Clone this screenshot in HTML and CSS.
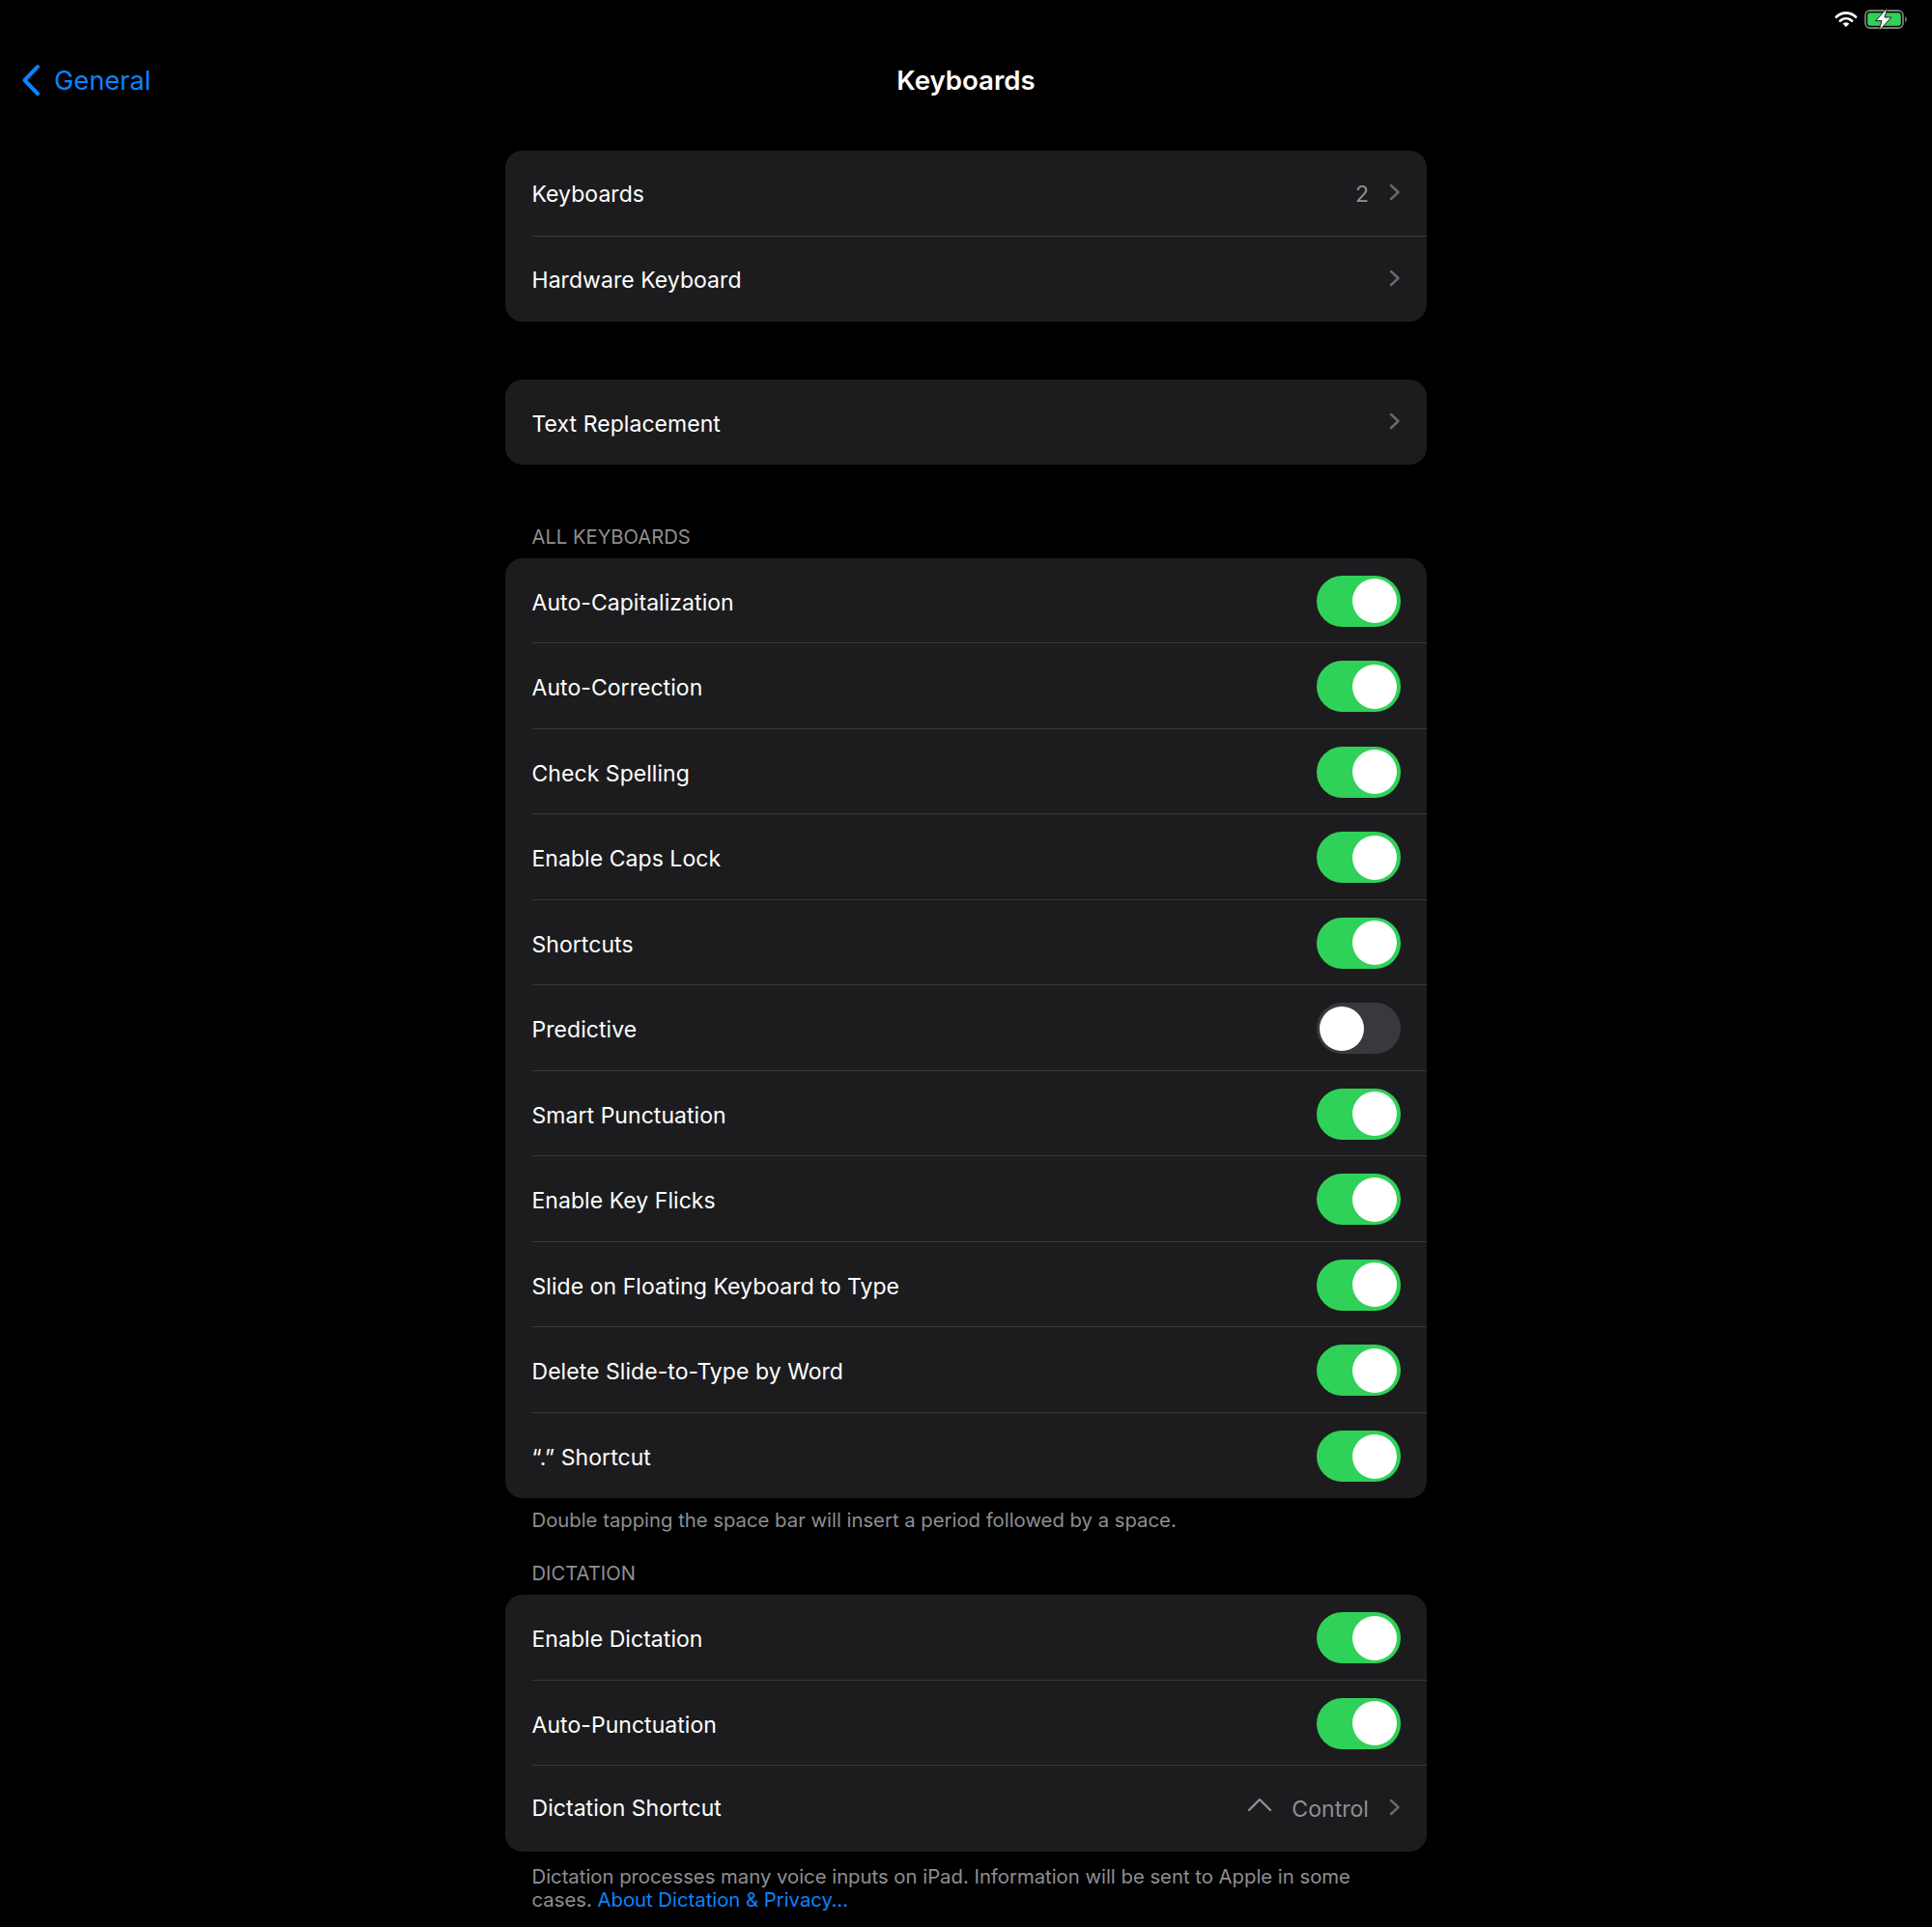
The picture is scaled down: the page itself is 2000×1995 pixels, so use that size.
FILE: index.html
```html
<!DOCTYPE html>
<html lang="en">
<head>
<meta charset="utf-8">
<title>Keyboards</title>
<link rel="stylesheet" href="styles.css">
</head>
<body>
<div class="status">
  <svg class="wifi" width="24" height="18" viewBox="0 0 24 18"><path d="M2 6.500C8 1 16 1 22 6.500" fill="none" stroke="#fff" stroke-width="2.800" stroke-linecap="round"/><path d="M6 10.500c3.600-3.200 8.400-3.200 12 0" fill="none" stroke="#fff" stroke-width="2.800" stroke-linecap="round"/><path d="M12 17l-3.400-3.600c2-1.600 4.800-1.600 6.800 0z" fill="#fff"/></svg>
  <svg class="battery" width="46" height="24" viewBox="0 0 46 24"><rect x="1" y="3" width="39" height="18" rx="5" fill="none" stroke="#7a7a7a" stroke-width="1.800"/><rect x="3.200" y="5.200" width="34.600" height="13.600" rx="3" fill="#30d158"/><path d="M42 9c2.500.5 2.500 5.500 0 6z" fill="#6e6e6e"/><path d="M24 0L11.500 13.500h6.500L15 24l13-14h-7z" fill="#fff" stroke="#1c1c1e" stroke-width="1"/></svg>
</div>
<header class="nav">
  <a class="back"><svg width="20" height="34" viewBox="0 0 20 34"><path d="M17 3L3.500 17 17 31" fill="none" stroke="#0a84ff" stroke-width="4" stroke-linecap="round" stroke-linejoin="round"/></svg><span>General</span></a>
  <h1>Keyboards</h1>
</header>
<main class="content">
  <section class="card">
    <div class="row link"><span>Keyboards</span><span class="value">2</span><svg class="chev" width="12" height="18" viewBox="0 0 12 18"><path d="M2 2l7.500 7L2 16" fill="none" stroke="#6a6a6e" stroke-width="2.400" stroke-linecap="round" stroke-linejoin="round"/></svg></div>
    <div class="row link"><span>Hardware Keyboard</span><svg class="chev" width="12" height="18" viewBox="0 0 12 18"><path d="M2 2l7.500 7L2 16" fill="none" stroke="#6a6a6e" stroke-width="2.400" stroke-linecap="round" stroke-linejoin="round"/></svg></div>
  </section>
  <section class="card gap-card">
    <div class="row link"><span>Text Replacement</span><svg class="chev" width="12" height="18" viewBox="0 0 12 18"><path d="M2 2l7.500 7L2 16" fill="none" stroke="#6a6a6e" stroke-width="2.400" stroke-linecap="round" stroke-linejoin="round"/></svg></div>
  </section>
  <h2 class="head first">ALL KEYBOARDS</h2>
  <section class="card">
    <div class="row sw"><span>Auto-Capitalization</span><i class="toggle on"></i></div>
    <div class="row sw"><span>Auto-Correction</span><i class="toggle on"></i></div>
    <div class="row sw"><span>Check Spelling</span><i class="toggle on"></i></div>
    <div class="row sw"><span>Enable Caps Lock</span><i class="toggle on"></i></div>
    <div class="row sw"><span>Shortcuts</span><i class="toggle on"></i></div>
    <div class="row sw"><span>Predictive</span><i class="toggle"></i></div>
    <div class="row sw"><span>Smart Punctuation</span><i class="toggle on"></i></div>
    <div class="row sw"><span>Enable Key Flicks</span><i class="toggle on"></i></div>
    <div class="row sw"><span>Slide on Floating Keyboard to Type</span><i class="toggle on"></i></div>
    <div class="row sw"><span>Delete Slide-to-Type by Word</span><i class="toggle on"></i></div>
    <div class="row sw"><span>“.” Shortcut</span><i class="toggle on"></i></div>
  </section>
  <p class="foot one">Double tapping the space bar will insert a period followed by a space.</p>
  <h2 class="head second">DICTATION</h2>
  <section class="card">
    <div class="row sw"><span>Enable Dictation</span><i class="toggle on"></i></div>
    <div class="row sw"><span>Auto-Punctuation</span><i class="toggle on"></i></div>
    <div class="row"><span>Dictation Shortcut</span><svg class="caret" width="26" height="16" viewBox="0 0 26 16"><path d="M2 14L13 3l11 11" fill="none" stroke="#8e8e93" stroke-width="2.400" stroke-linecap="round" stroke-linejoin="round"/></svg><span class="value ctrl">Control</span><svg class="chev" width="12" height="18" viewBox="0 0 12 18"><path d="M2 2l7.500 7L2 16" fill="none" stroke="#6a6a6e" stroke-width="2.400" stroke-linecap="round" stroke-linejoin="round"/></svg></div>
  </section>
  <p class="foot two">Dictation processes many voice inputs on iPad. Information will be sent to Apple in some cases. <a>About Dictation &amp; Privacy…</a></p>
</main>
</body>
</html>
```
FILE: styles.css
```css
* { box-sizing: border-box; }
html, body { margin: 0; padding: 0; background: #000; }
body { width: 2000px; height: 1995px; overflow: hidden; color: #fff; font-family: Inter, "Liberation Sans", sans-serif; }
.status { height: 40px; display: flex; justify-content: flex-end; align-items: center; gap: 7px; padding-right: 24px; }
.nav { position: relative; height: 86px; display: flex; align-items: center; justify-content: center; }
.nav h1 { margin: 0; font-size: 27.6px; font-weight: 600; }
.back { position: absolute; left: 22px; top: 0; height: 86px; display: flex; align-items: center; gap: 14px; color: #0a84ff; font-size: 27.2px; }
.content { width: 954px; margin: 30px auto 0; }
.card { background: #1c1c1e; border-radius: 18px; overflow: hidden; }
.gap-card { margin-top: 60px; }
.gap-card .row { height: 88px; }
.row { height: 88.5px; margin-left: 27.5px; padding-right: 27px; display: flex; align-items: center; font-size: 23px; letter-spacing: 0.05px; border-bottom: 1px solid #38383a; }
.row:last-child { border-bottom: 0; }
.row > span:first-child { margin-right: auto; }
.row.link > span:first-child { padding-top: 3px; }
.row.sw > span:first-child { padding-top: 5px; }
.value { color: #8e8e93; }
.value + .chev { margin-left: 21px; }
.chev { margin-left: 20px; margin-top: -2px; }
.link .value { padding-top: 3px; }
.ctrl { padding-top: 2px; }
.caret { margin-right: 20px; margin-top: -8px; }
.toggle { display: block; width: 87px; height: 53px; margin-top: 2px; border-radius: 27px; background: #39393d; position: relative; }
.toggle::after { content: ""; position: absolute; top: 3.5px; left: 3px; width: 46px; height: 46px; border-radius: 50%; background: #fff; }
.toggle.on { background: #30d158; }
.toggle.on::after { left: 37px; }
.head { margin: 0; padding-left: 27.5px; color: #8e8e93; font-size: 20.2px; font-weight: 400; line-height: 24px; }
.head.first { margin-top: 62.5px; margin-bottom: 10px; }
.head.second { margin-top: 31px; margin-bottom: 10px; }
.foot { margin: 0; padding: 0 27.5px; color: #8e8e93; font-size: 20.3px; line-height: 24px; }
.foot.one { margin-top: 11px; }
.foot.two { margin-top: 14px; }
.foot a { color: #0a84ff; }
```
